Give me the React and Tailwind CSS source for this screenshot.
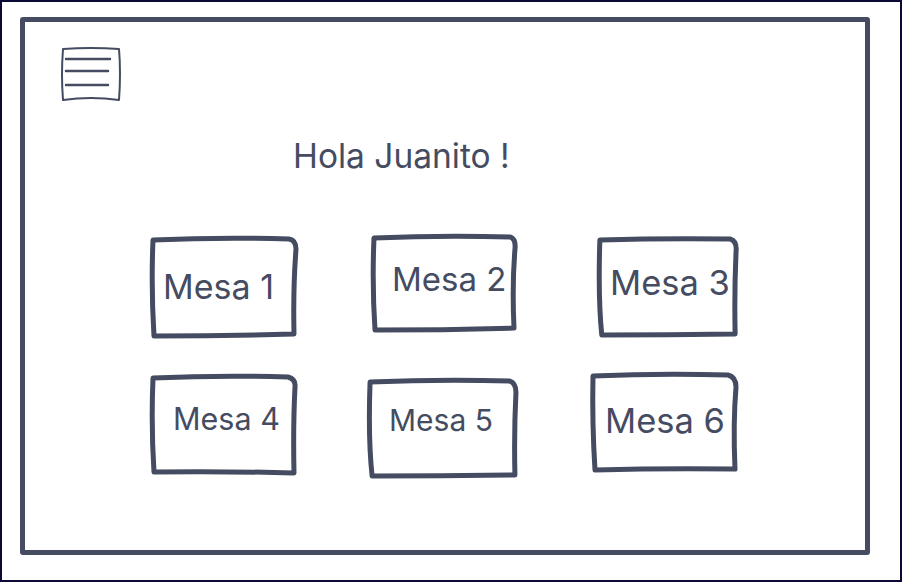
import React from "react";

const INK = "#454c61";

const Sketch = ({ d }) => (
  <svg
    className="absolute inset-0 w-full h-full overflow-visible pointer-events-none"
    viewBox="0 0 148 98"
    preserveAspectRatio="none"
  >
    <path
      d={d}
      fill="none"
      stroke={INK}
      strokeWidth="5"
      strokeLinecap="round"
      strokeLinejoin="round"
      vectorEffect="non-scaling-stroke"
    />
  </svg>
);

const outlines = [
  "M3 3 Q70 0 139 2 Q146 3 146 12 Q143 50 144 95 Q75 97 4 97 Q1 50 3 3 Z",
  "M4 3 Q72 0 140 2 Q146 4 145 14 Q142 50 144 94 Q74 96 5 96 Q2 50 4 3 Z",
  "M3 3 Q72 1 140 2 Q147 4 146 14 Q144 55 145 96 Q74 97 5 97 Q1 60 3 3 Z",
  "M3 3 Q70 0 138 2 Q146 4 145 12 Q143 50 144 97 Q72 95 4 96 Q1 50 3 3 Z",
  "M3 4 Q72 1 140 3 Q146 5 146 14 Q144 55 145 96 Q74 97 5 97 Q1 60 3 4 Z",
  "M3 3 Q70 0 138 2 Q146 4 146 14 Q143 50 145 96 Q74 95 5 97 Q2 50 3 3 Z",
];

const tables = [
  { label: "Mesa 1", box: "h-[100px] pl-[13px]", text: "text-[34px]" },
  { label: "Mesa 2", box: "h-[97px] -mt-[2px] pl-[22px]", text: "text-[33px] mb-[8px]" },
  { label: "Mesa 3", box: "h-[99px] ml-[7px] pl-[13px]", text: "text-[34.5px] mb-[6px]" },
  { label: "Mesa 4", box: "h-[99px] pl-[23px]", text: "text-[30.5px] mb-[10px]" },
  { label: "Mesa 5", box: "h-[99px] mt-[3px] -ml-[3px] pl-[22px]", text: "text-[30px] mb-[15px]" },
  { label: "Mesa 6", box: "h-[98px] -mt-[2px] pl-[15px]", text: "text-[34.5px]" },
];

export default function App() {
  return (
    <div
      className="w-[902px] h-[582px] bg-white border-2 border-[#0b0936] overflow-hidden"
      style={{ fontFamily: "Inter, 'Liberation Sans', sans-serif" }}
    >
      <div className="ml-[18px] mt-[15px] w-[850px] h-[538px] border-[5px] border-[#454c61] rounded-[3px]">
        <div className="pl-[35px] pt-[25px]">
          <svg width="62" height="56" viewBox="0 0 62 56">
            <path
              d="M3 2 Q31 0 59 2 Q61 26 59 53 Q31 49 3 53 Q1 28 3 2 Z"
              fill="none"
              stroke={INK}
              strokeWidth="2"
              strokeLinejoin="round"
            />
            <path d="M6 12 L50 12 M6 24 L48 24 M6 38 L48 38" stroke={INK} strokeWidth="2.5" strokeLinecap="round" />
          </svg>
        </div>
        <h1 className="ml-[268px] mt-[37px] text-[33.5px] leading-none text-[#454c61] font-normal">
          Hola Juanito !
        </h1>
        <div className="ml-[125px] mt-[63px] grid grid-cols-[148px_148px_148px] gap-x-[72px] gap-y-[38px]">
          {tables.map((t, i) => (
            <div key={i} className={`relative flex items-center ${t.box}`}>
              <Sketch d={outlines[i]} />
              <span className={`${t.text} leading-none text-[#454c61]`}>{t.label}</span>
            </div>
          ))}
        </div>
      </div>
    </div>
  );
}
